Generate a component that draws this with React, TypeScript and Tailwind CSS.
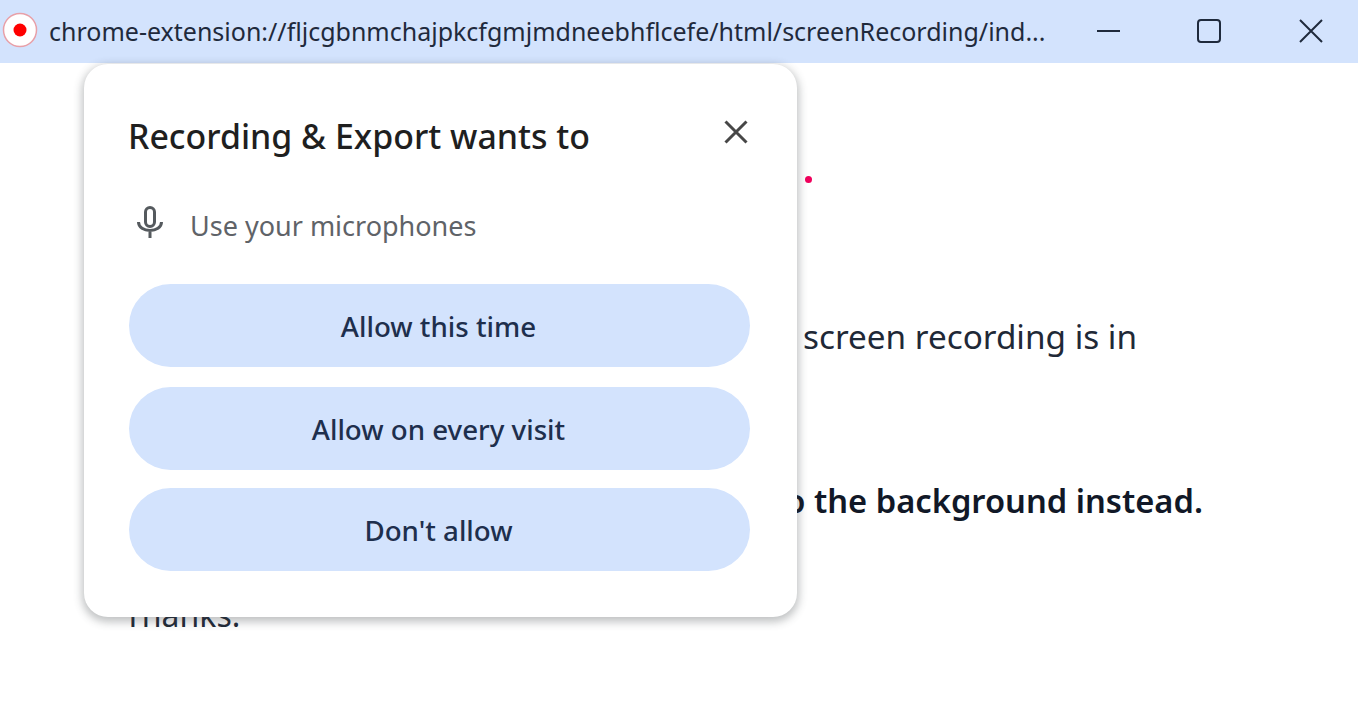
export default function App() {
  return (
    <div className="relative h-[728px] w-[1358px] overflow-hidden bg-white font-['Noto_Sans','Open_Sans',sans-serif]">
      <header className="flex h-[63px] items-center bg-[#d3e3fd] pb-[2px] pl-[2px] text-[#1f2937]">
        <svg width="36" height="36" viewBox="0 0 36 36" className="mb-[2px] shrink-0">
          <circle cx="18" cy="18" r="16.5" fill="#fff" stroke="#e8a0a8" strokeWidth="1.5" />
          <circle cx="18" cy="18" r="6.5" fill="#ff0000" />
        </svg>
        <span className="ml-[11px] w-[1012px] truncate text-[25px] leading-8 text-[#1f2a3c]">
          chrome-extension://fljcgbnmchajpkcfgmjmdneebhflcefe/html/screenRecording/ind...
        </span>
        <div className="ml-[36px] flex items-center text-[#1f2a3c]">
          <svg width="24" height="24" viewBox="0 0 24 24"><path d="M0 12h23" stroke="currentColor" strokeWidth="2" /></svg>
          <svg width="24" height="24" viewBox="0 0 24 24" className="ml-[76px]"><rect x="1" y="1" width="22" height="22" rx="3" fill="none" stroke="currentColor" strokeWidth="2" /></svg>
          <svg width="24" height="24" viewBox="0 0 24 24" className="ml-[78px]"><path d="M1 1l22 22M23 1L1 23" stroke="currentColor" strokeWidth="2" /></svg>
        </div>
      </header>

      <main className="text-[#1f2937]">
        <div className="mt-[113px] ml-[805px] h-[7px] w-[7px] rounded-full bg-[#f0005c]" />
        <p className="ml-[803px] mt-[133px] text-[33.3px] leading-10">screen recording is in</p>
        <p className="ml-[772px] mt-[125px] text-[32.7px] font-semibold leading-10 text-[#111827]">to the background instead.</p>
        <p className="ml-[124px] mt-[74px] text-[32px] leading-10">Thanks.</p>
      </main>

      <section className="absolute left-[84px] top-[64px] flex h-[553px] w-[713px] flex-col rounded-[24px] bg-white pl-[45px] pr-[47px] pt-[48px] shadow-[0_3px_8px_2px_rgba(60,64,67,0.32)]">
        <div className="flex items-center justify-between">
          <h2 className="-ml-px text-[33.9px] font-medium leading-[48px] text-[#1f1f1f]">Recording &amp; Export wants to</h2>
          <svg width="24" height="24" viewBox="0 0 24 24" className="mb-2 mr-[2px] text-[#474747]"><path d="M1.5 1.5l21 21M22.5 1.5l-21 21" stroke="currentColor" strokeWidth="3" /></svg>
        </div>
        <div className="mt-[46px] flex items-center text-[#5f6368]">
          <svg width="32" height="40" viewBox="0 0 32 40" className="ml-[5px] shrink-0">
            <rect x="11.5" y="1.5" width="9" height="19" rx="4.5" fill="none" stroke="#555a5e" strokeWidth="3" />
            <path d="M4.5 16C4.5 21.5 10 24.5 16 24.5S27.5 21.5 27.5 16M16 24.5V32" fill="none" stroke="#555a5e" strokeWidth="3" />
          </svg>
          <span className="ml-[24px] text-[27px] leading-10">Use your microphones</span>
        </div>
        <div className="mt-[38px] flex flex-col">
          <button className="flex h-[83px] items-center justify-center rounded-full bg-[#d3e3fd] pr-[2px] pt-[3px] text-[27.7px] font-medium text-[#1e2f4d]">Allow this time</button>
          <button className="mt-[20px] flex h-[83px] items-center justify-center rounded-full bg-[#d3e3fd] pr-[2px] pt-[3px] text-[27.7px] font-medium text-[#1e2f4d]">Allow on every visit</button>
          <button className="mt-[18px] flex h-[83px] items-center justify-center rounded-full bg-[#d3e3fd] pr-[2px] pt-[3px] text-[27.7px] font-medium text-[#1e2f4d]">Don't allow</button>
        </div>
      </section>
    </div>
  );
}
